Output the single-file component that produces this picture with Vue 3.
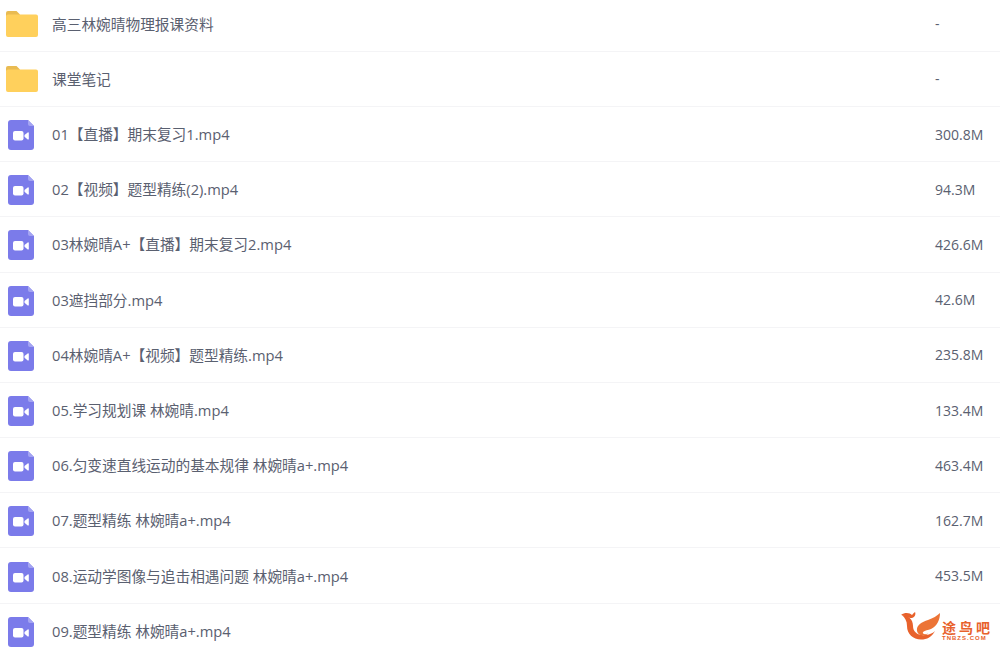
<script setup>
const rows = [
  { name: "高三林婉晴物理报课资料", size: "-", type: "folder" },
  { name: "课堂笔记", size: "-", type: "folder" },
  { name: "01【直播】期末复习1.mp4", size: "300.8M", type: "video" },
  { name: "02【视频】题型精练(2).mp4", size: "94.3M", type: "video" },
  { name: "03林婉晴A+【直播】期末复习2.mp4", size: "426.6M", type: "video" },
  { name: "03遮挡部分.mp4", size: "42.6M", type: "video" },
  { name: "04林婉晴A+【视频】题型精练.mp4", size: "235.8M", type: "video" },
  { name: "05.学习规划课 林婉晴.mp4", size: "133.4M", type: "video" },
  { name: "06.匀变速直线运动的基本规律 林婉晴a+.mp4", size: "463.4M", type: "video" },
  { name: "07.题型精练 林婉晴a+.mp4", size: "162.7M", type: "video" },
  { name: "08.运动学图像与追击相遇问题 林婉晴a+.mp4", size: "453.5M", type: "video" },
  { name: "09.题型精练 林婉晴a+.mp4", size: "", type: "video" },
];
</script>

<template>
  <div class="page">
    <div class="list">
      <div v-for="row in rows" :key="row.name" class="row">
        <svg v-if="row.type === 'folder'" class="icon" viewBox="0 0 32 26" width="32" height="26">
          <path d="M0 2a2 2 0 0 1 2-2h8.5l3.5 3.5v2H0z" fill="#e9bb52" />
          <path d="M0 5.5a2 2 0 0 1 2-2h28a2 2 0 0 1 2 2V24a2 2 0 0 1-2 2H2a2 2 0 0 1-2-2z" fill="#ffd05c" />
        </svg>
        <svg v-else class="icon video" viewBox="0 0 26 30" width="26" height="30">
          <path d="M3 0h17l6 6v21a3 3 0 0 1-3 3H3a3 3 0 0 1-3-3V3a3 3 0 0 1 3-3z" fill="#7b7bea" />
          <path d="M20 0l6 6h-4a2 2 0 0 1-2-2z" fill="#a4a4f2" />
          <rect x="5" y="11" width="10.5" height="9.5" rx="2" fill="#fff" />
          <path d="M16.5 15l3.2-2.600c.5-.4 1.100-.1 1.100.5v6c0 .6-.6.9-1.100.5l-3.200-2.600z" fill="#fff" />
        </svg>
        <span class="name">{{ row.name }}</span>
        <span class="size">{{ row.size }}</span>
      </div>
    </div>

    <div class="watermark">
      <svg class="mark-logo" viewBox="0 0 42 28" width="42" height="28">
        <path d="M2 3C8 3 13 7 13 14c0 6 5 10 13 9 4-.5 7-2 9-4-3 6-8 8.500-14 8.500C13 27.500 7 22 7 14 7 9 5 6 2 3z" fill="#e8622c" />
        <path d="M40 1c0 7-3 13-9 16-3 1.500-6 1-8 3-1 2 2 3 5 1.500-3 3.500-10 2.500-11-2.500-1-6 5-9 11-11 5-2 9-4 12-7z" fill="#ec7436" />
        <path d="M1 3c4-3 9-2 11 0 1-1.500 2-2.500 3-3 1 2 0 5-3 6-3 .5-6-2.500-11-3z" fill="#e8622c" />
      </svg>
      <div class="mark-text">
        <span class="mark-cn">途鸟吧</span>
        <span class="mark-en">TNBZS.COM</span>
      </div>
    </div>
  </div>
</template>

<style scoped>
.page {
  position: relative;
  width: 1000px;
  height: 647px;
  overflow: hidden;
  background: #fff;
  font-family: "Open Sans", "Noto Sans CJK SC", sans-serif;
}

.list {
  margin-top: -3.4px;
}

.row {
  display: flex;
  align-items: center;
  height: 55.2px;
  box-sizing: border-box;
  padding-left: 6px;
  border-bottom: 1px solid #f4f4f6;
  color: #5a6070;
  font-size: 14.7px;
}

.icon {
  flex: none;
  margin-right: 14px;
}

.icon.video {
  margin-left: 2px;
  margin-top: 2px;
  margin-right: 18px;
}

.name {
  flex: 1;
  margin-bottom: 1px;
  white-space: nowrap;
}

.size {
  width: 65px;
  font-size: 14px;
}

.watermark {
  position: absolute;
  left: 900px;
  top: 612px;
  display: flex;
  align-items: flex-start;
}

.mark-text {
  display: flex;
  flex-direction: column;
  margin-top: 9px;
  color: #e8622c;
  line-height: 1;
}

.mark-cn {
  font-size: 14px;
  font-weight: 700;
  letter-spacing: 3px;
  line-height: 14px;
}

.mark-en {
  font-family: "Liberation Sans", sans-serif;
  font-size: 6px;
  font-weight: 700;
  letter-spacing: 1px;
  line-height: 6px;
}
</style>

<style>
html,
body {
  background: #fff;
}
</style>
